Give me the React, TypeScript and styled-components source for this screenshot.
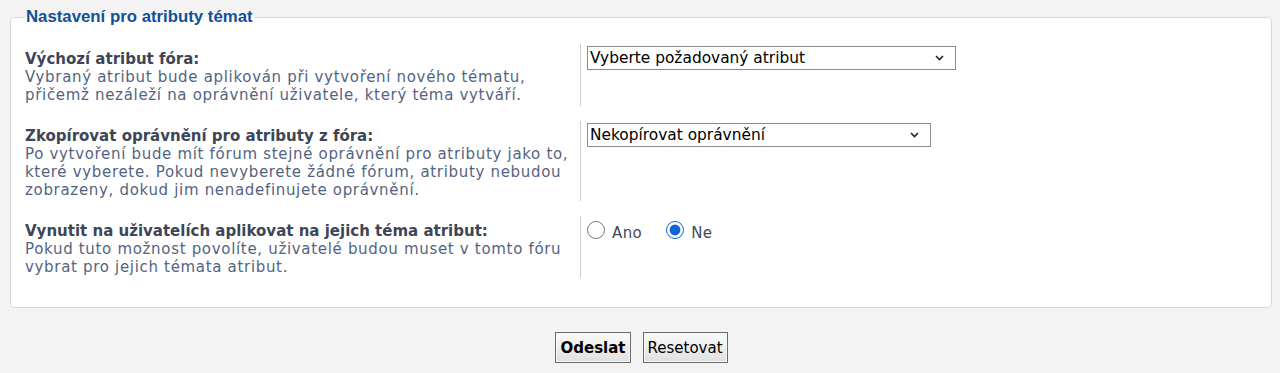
import React, { useState } from "react";
import styled, { createGlobalStyle } from "styled-components";

const GlobalStyle = createGlobalStyle`
  html, body {
    margin: 0;
    padding: 0;
    background: #f3f3f3;
  }
  body {
    font-family: "DejaVu Sans", Verdana, sans-serif;
    color: #536482;
  }
`;

const Page = styled.div`
  padding: 6px 8px 0 10px;
  width: 1280px;
  box-sizing: border-box;
`;

const Fieldset = styled.fieldset`
  margin: 0;
  padding: 16px 14px 29px 14px;
  border: 1px solid #d7d7d7;
  border-radius: 5px;
  background: #ffffff;
  min-width: 0;
`;

const Legend = styled.legend`
  font-family: "Liberation Sans", Arial, sans-serif;
  font-weight: bold;
  font-size: 16.8px;
  color: #115098;
  padding: 0 1px;
  line-height: 22px;
`;

const Row = styled.dl`
  display: flex;
  margin: 0 0 15px 0;
  &:last-child {
    margin-bottom: 0;
  }
`;

const Term = styled.dt`
  width: 555px;
  padding: 6px 0 2px;
  border-right: 1px solid #cccccc;
  font-size: 15px;
  line-height: 18px;
`;

const Label = styled.label`
  display: block;
  font-weight: bold;
  color: #3d4656;
`;

const Explain = styled.span`
  display: block;
  color: #536482;
  letter-spacing: 0.68px;
`;

const Def = styled.dd`
  margin: 0 0 0 6px;
  padding-top: 2px;
  display: flex;
  align-items: flex-start;
  gap: 24px;
`;

const SelectBox = styled.div<{ $width: number }>`
  position: relative;
  width: ${({ $width }) => $width}px;
`;

const Select = styled.select`
  appearance: none;
  width: 100%;
  height: 24px;
  font-family: "DejaVu Sans", Verdana, sans-serif;
  font-size: 15.4px;
  color: #000;
  background: #fff;
  border: 1px solid #8c8c8c;
  border-radius: 0;
  padding: 0 24px 0 2px;
`;

const Chevron = styled.svg`
  position: absolute;
  right: 12px;
  top: 9px;
  pointer-events: none;
`;

const RadioLabel = styled.label`
  display: flex;
  align-items: center;
  gap: 7px;
  font-size: 15px;
  letter-spacing: 0.4px;
  color: #3f4a5a;
`;

const RadioText = styled.span`
  padding-top: 6px;
`;

const Radio = styled.input`
  width: 18px;
  height: 18px;
  margin: 0;
  accent-color: #1164d8;
`;

const Buttons = styled.div`
  display: flex;
  justify-content: center;
  gap: 12px;
  padding: 24px 0 0 1px;
`;

const Button = styled.button<{ $primary?: boolean }>`
  font-family: "DejaVu Sans", Verdana, sans-serif;
  font-size: 15px;
  font-weight: ${({ $primary }) => ($primary ? "bold" : "normal")};
  color: #000;
  height: 31px;
  padding: 0 4px;
  border: 1px solid #6b6b6b;
  border-radius: 0;
  background: linear-gradient(#fafafa, #e0e0e0);
  box-shadow: inset 0 0 0 1px #f7f7f7;
`;

const rows = [
  {
    label: "Výchozí atribut fóra:",
    explain: [
      "Vybraný atribut bude aplikován při vytvoření nového tématu,",
      "přičemž nezáleží na oprávnění uživatele, který téma vytváří.",
    ],
    control: "default",
  },
  {
    label: "Zkopírovat oprávnění pro atributy z fóra:",
    explain: [
      "Po vytvoření bude mít fórum stejné oprávnění pro atributy jako to,",
      "které vyberete. Pokud nevyberete žádné fórum, atributy nebudou",
      "zobrazeny, dokud jim nenadefinujete oprávnění.",
    ],
    control: "copy",
  },
  {
    label: "Vynutit na uživatelích aplikovat na jejich téma atribut:",
    explain: [
      "Pokud tuto možnost povolíte, uživatelé budou muset v tomto fóru",
      "vybrat pro jejich témata atribut.",
    ],
    control: "force",
  },
];

function Dropdown({ width, text }: { width: number; text: string }) {
  return (
    <SelectBox $width={width}>
      <Select>
        <option>{text}</option>
      </Select>
      <Chevron width="9" height="6" viewBox="0 0 9 6">
        <path d="M1 1l3.5 3.5L8 1" fill="none" stroke="#222" strokeWidth="1.6" />
      </Chevron>
    </SelectBox>
  );
}

export default function App() {
  const [force, setForce] = useState("0");

  const renderControl = (kind: string) => {
    if (kind === "default") {
      return <Dropdown width={369} text="Vyberte požadovaný atribut" />;
    }
    if (kind === "copy") {
      return <Dropdown width={344} text="Nekopírovat oprávnění" />;
    }
    return (
      <>
        <RadioLabel>
          <Radio
            type="radio"
            name="force"
            checked={force === "1"}
            onChange={() => setForce("1")}
          />
          <RadioText>Ano</RadioText>
        </RadioLabel>
        <RadioLabel>
          <Radio
            type="radio"
            name="force"
            checked={force === "0"}
            onChange={() => setForce("0")}
          />
          <RadioText>Ne</RadioText>
        </RadioLabel>
      </>
    );
  };

  return (
    <Page>
      <GlobalStyle />
      <Fieldset>
        <Legend>Nastavení pro atributy témat</Legend>
        {rows.map((row) => (
          <Row key={row.control}>
            <Term>
              <Label>{row.label}</Label>
              {row.explain.map((line) => (
                <Explain key={line}>{line}</Explain>
              ))}
            </Term>
            <Def>{renderControl(row.control)}</Def>
          </Row>
        ))}
      </Fieldset>
      <Buttons>
        <Button $primary>Odeslat</Button>
        <Button>Resetovat</Button>
      </Buttons>
    </Page>
  );
}
